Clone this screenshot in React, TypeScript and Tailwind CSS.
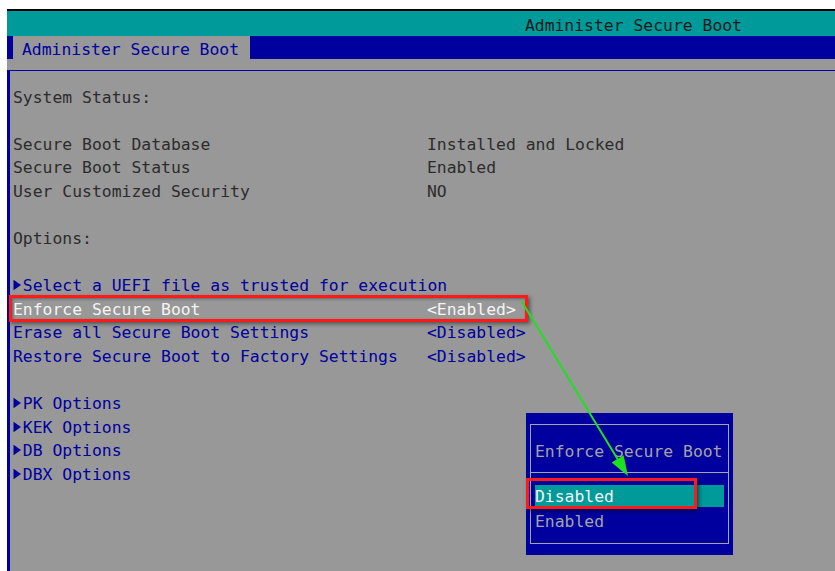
import React from "react";

const BLUE = "text-[#00009f]";

function Caret() {
  return (
    <span className="inline-flex w-[9.87px] items-center justify-start align-middle">
      <svg width="9" height="12" viewBox="0 0 9 12" className="-mt-[3px]">
        <polygon points="0.5,0.8 8,6 0.5,11.2" fill="#00009f" />
      </svg>
    </span>
  );
}

function Row({ label, value, tone, caret }: { label: string; value?: string; tone: string; caret?: boolean }) {
  return (
    <div className={`grid h-[23.6px] grid-cols-[414px_1fr] whitespace-pre ${tone}`}>
      <span>
        {caret && <Caret />}
        {label}
      </span>
      <span>{value ?? ""}</span>
    </div>
  );
}

function Gap() {
  return <div className="h-[23.6px]" />;
}

export default function App() {
  const status = "text-[#2c2c2c]";
  return (
    <div className="relative h-[571px] w-[835px] overflow-hidden bg-white pl-[7px] pt-[9px] font-['DejaVu_Sans_Mono','Liberation_Mono',monospace] text-[16.4px] leading-[23.6px]">
      <div className="flex h-full flex-col border-t-2 border-black">
        {/* title bar */}
        <div className="flex h-[25px] items-center justify-end bg-[#009a9a] pr-[93px] pt-[4px] text-[#1a1a1a]">
          Administer Secure Boot
        </div>
        {/* tab strip */}
        <div className="flex h-[23px] items-stretch bg-[#00009f] pl-[6px]">
          <div className={`flex items-center bg-[#989898] pl-[9px] pr-[11px] pt-[4px] ${BLUE}`}>Administer Secure Boot</div>
        </div>
        {/* form body */}
        <div className="flex flex-1 flex-col bg-[#989898] pt-[11px]">
          <div className="flex-1 border-l-[3px] border-t border-[#00009f] pl-[3px] pt-[14.5px]">
            <Row label="System Status:" tone={status} />
            <Gap />
            <Row label="Secure Boot Database" value="Installed and Locked" tone={status} />
            <Row label="Secure Boot Status" value="Enabled" tone={status} />
            <Row label="User Customized Security" value="NO" tone={status} />
            <Gap />
            <Row label="Options:" tone={status} />
            <Gap />
            <Row label="Select a UEFI file as trusted for execution" tone={BLUE} caret />
            <div className="relative">
              <Row label="Enforce Secure Boot" value="<Enabled>" tone="text-[#f4f4f4]" />
              <div className="absolute -left-[4px] -top-[3px] h-[27px] w-[519px] border-[3px] border-[#ff1a1a] shadow-[2px_2px_4px_rgba(0,0,0,0.45),inset_1px_1px_3px_rgba(0,0,0,0.35)]" />
            </div>
            <Row label="Erase all Secure Boot Settings" value="<Disabled>" tone={BLUE} />
            <Row label="Restore Secure Boot to Factory Settings" value="<Disabled>" tone={BLUE} />
            <Gap />
            <Row label="PK Options" tone={BLUE} caret />
            <Row label="KEK Options" tone={BLUE} caret />
            <Row label="DB Options" tone={BLUE} caret />
            <Row label="DBX Options" tone={BLUE} caret />
          </div>
        </div>
      </div>

      {/* option popup */}
      <div className="absolute left-[526px] top-[413px] h-[142px] w-[207px] bg-[#00009f] px-[4px] pb-[11px] pt-[11px]">
        <div className="flex h-full flex-col border border-[#a4a4a4]">
          <div className="h-[48px] border-b border-[#a4a4a4] pl-[4px] pt-[15px] text-[#a4a4a4]">Enforce Secure Boot</div>
          <div className="mx-[4px] mt-[12px] flex h-[22px] items-center bg-[#009a9a] pt-[2px] text-[#f4f4f4]">Disabled</div>
          <div className="pl-[4px] pt-[3px] text-[#a4a4a4]">Enabled</div>
        </div>
        <div className="absolute left-0 top-[65px] h-[31px] w-[171px] border-[3px] border-[#ff1a1a] shadow-[2px_2px_4px_rgba(0,0,0,0.5)]" />
      </div>

      {/* pointer arrow */}
      <svg className="pointer-events-none absolute left-0 top-0" width="835" height="571" viewBox="0 0 835 571">
        <line x1="522" y1="302" x2="620" y2="463" stroke="#1fe01f" strokeWidth="2" strokeLinecap="round" />
        <polygon points="628,476 611.6,462.5 623.6,455.3" fill="#1fe01f" />
      </svg>
    </div>
  );
}
